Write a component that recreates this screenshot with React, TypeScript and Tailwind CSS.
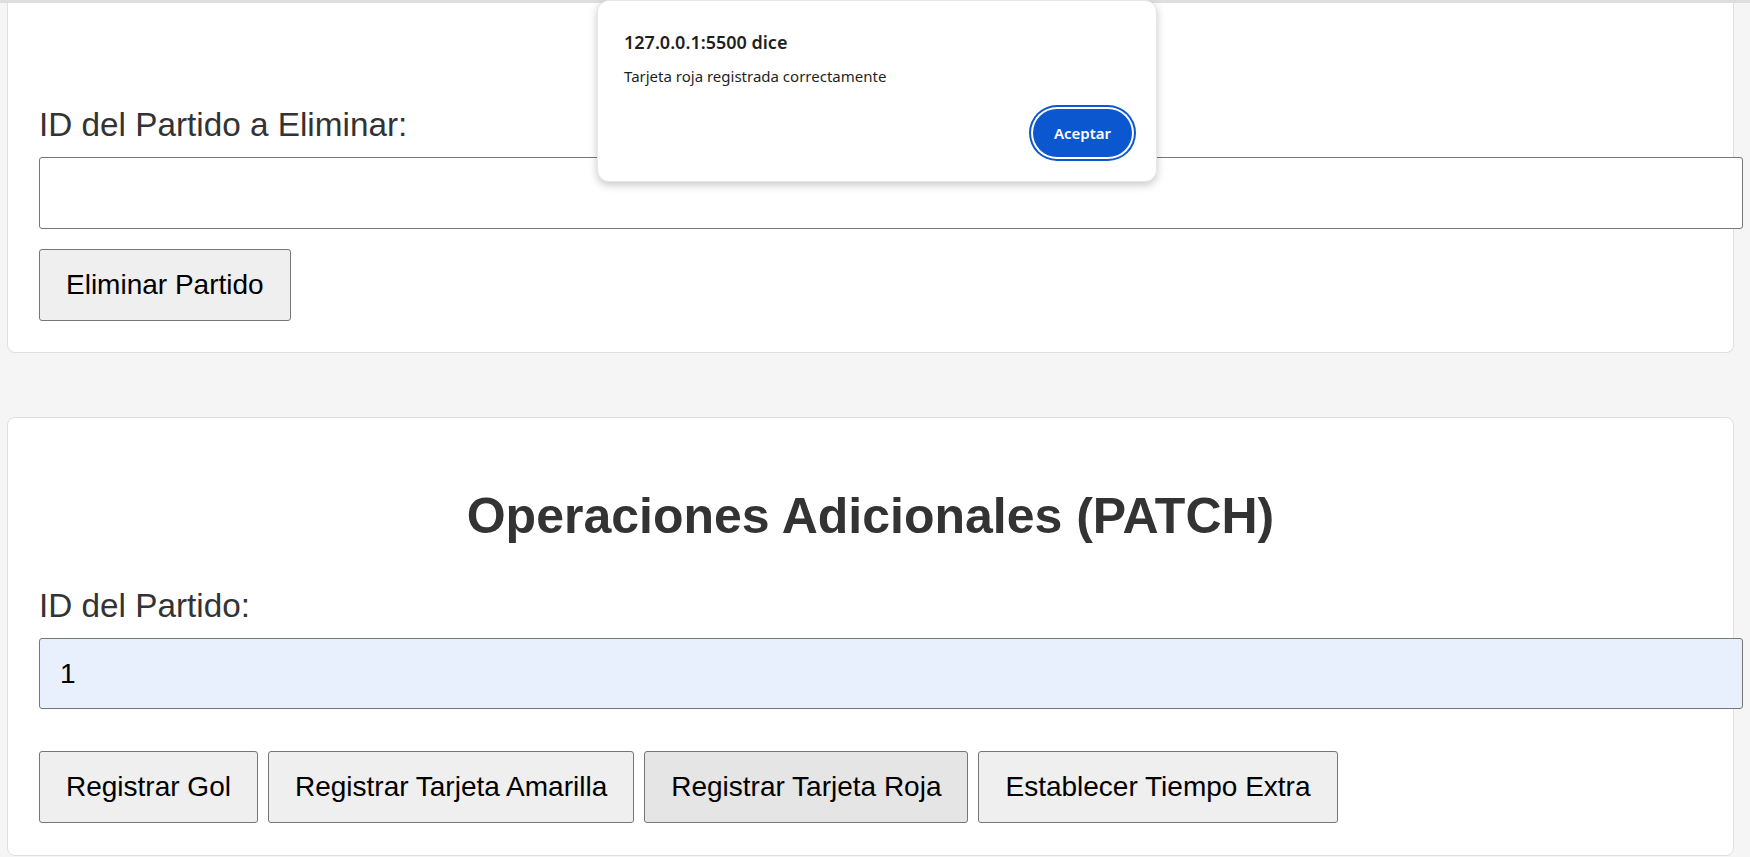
import React from 'react';

const btn =
  'h-[72px] px-[26px] text-[28px] leading-[32px] text-black border border-[#767676] rounded-[3px] whitespace-nowrap';

const App: React.FC = () => {
  return (
    <div className="relative min-h-screen overflow-hidden bg-[#f5f5f5] font-['Liberation_Sans',Arial,sans-serif]">
      <div className="h-[3px] bg-[#dedede]"></div>

      <div className="ml-[7px] w-[1727px]">
        {/* delete section (scrolled, top cut off) */}
        <section className="bg-white border border-t-0 border-[#e0e0e0] rounded-b-[8px] px-[31px] pt-[103px] pb-[31px]">
          <label className="block text-[33.3px] leading-[38px] text-[#333]">ID del Partido a Eliminar:</label>
          <input
            type="text"
            className="block mt-[13px] h-[72px] w-[calc(100%+41px)] border border-[#767676] rounded-[3px] bg-white px-[20px] text-[28px] text-black outline-none"
          />
          <button className={`${btn} mt-[20px] bg-[#efefef]`}>Eliminar Partido</button>
        </section>

        {/* patch section */}
        <section className="mt-[64px] bg-white border border-[#e0e0e0] rounded-[8px] px-[31px] pt-[70px] pb-[32px]">
          <h2 className="text-center text-[50px] leading-[56px] font-bold text-[#333]">
            Operaciones Adicionales (PATCH)
          </h2>
          <label className="block mt-[43px] text-[33.3px] leading-[38px] text-[#333]">ID del Partido:</label>
          <input
            type="text"
            defaultValue="1"
            className="block mt-[13px] h-[71px] w-[calc(100%+41px)] border border-[#767676] rounded-[3px] bg-[#e8f0fe] px-[20px] text-[28px] text-black outline-none"
          />
          <div className="mt-[42px] flex gap-[10px]">
            <button className={`${btn} bg-[#efefef]`}>Registrar Gol</button>
            <button className={`${btn} bg-[#efefef]`}>Registrar Tarjeta Amarilla</button>
            <button className={`${btn} bg-[#e5e5e5]`}>Registrar Tarjeta Roja</button>
            <button className={`${btn} bg-[#efefef]`}>Establecer Tiempo Extra</button>
          </div>
        </section>
      </div>

      {/* alert dialog */}
      <div className="absolute top-0 left-[597px] w-[560px] h-[182px] bg-white rounded-[12px] border border-[#e6e6e6] shadow-[0_3px_8px_rgba(0,0,0,0.22)] font-['Noto_Sans','Open_Sans',sans-serif] flex flex-col pl-[26px] pr-[20px]">
        <h3 className="mt-[29px] text-[18px] leading-[24px] font-semibold text-[#1f1f1f]">127.0.0.1:5500 dice</h3>
        <p className="mt-[12px] text-[15px] leading-[20px] text-[#1f1f1f]">Tarjeta roja registrada correctamente</p>
        <div className="flex justify-end mt-[23px]">
          <button className="mr-[4px] w-[99px] h-[48px] rounded-full bg-[#0b57d0] text-white text-[15px] font-semibold shadow-[0_0_0_2px_#fff,0_0_0_4px_#0b57d0]">
            Aceptar
          </button>
        </div>
      </div>
    </div>
  );
};

export default App;
